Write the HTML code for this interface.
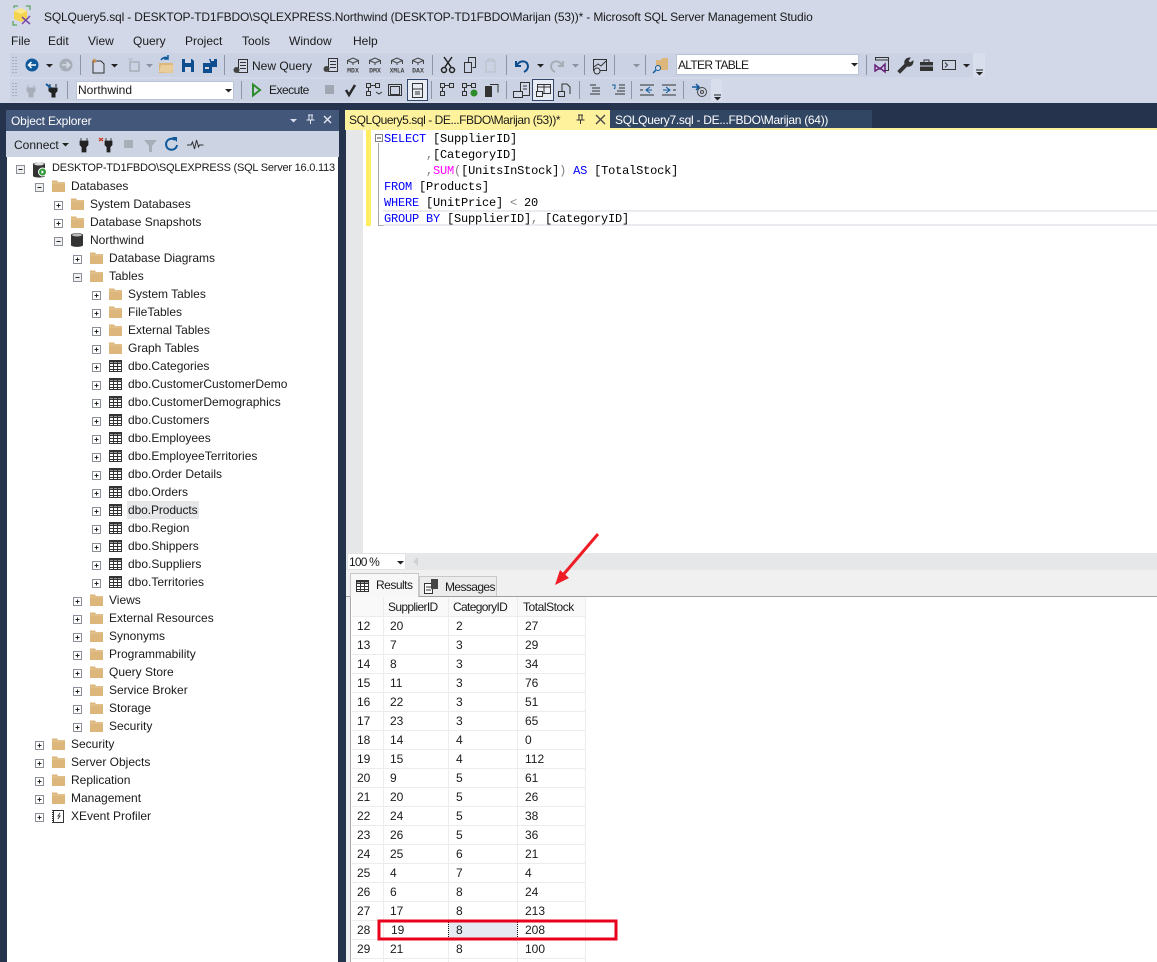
<!DOCTYPE html>
<html><head><meta charset="utf-8"><style>
html,body{margin:0;padding:0}
body{width:1157px;height:962px;overflow:hidden;position:relative;background:#d2d8e8;font:12px/18px "Liberation Sans",sans-serif;color:#1a1a1a}
.b{position:absolute}
.t{position:absolute;white-space:pre;line-height:18px}
.c{position:absolute;white-space:pre;font:12px/16px "Liberation Mono",monospace;letter-spacing:-.2px;color:#000}
.k{color:#0000ff}.f{color:#ff00ff}.g{color:#808080}
svg{position:absolute;left:0;top:0}
</style></head><body>
<div class="b" style="left:10px;top:53px;width:963px;height:24px;background:#cad2e3"></div>
<div class="b" style="left:973px;top:53px;width:12px;height:24px;background:#d8deeb"></div>
<div class="b" style="left:10px;top:79px;width:701px;height:22px;background:#cad2e3"></div>
<div class="b" style="left:711px;top:79px;width:11px;height:22px;background:#d8deeb"></div>
<div class="b" style="left:676px;top:54px;width:183px;height:21px;background:#fff;border:1px solid #bcc5d8;box-sizing:border-box"></div>
<div class="b" style="left:76px;top:81px;width:158px;height:19px;background:#fff;border:1px solid #bcc5d8;box-sizing:border-box"></div>
<div class="b" style="left:407px;top:79px;width:21px;height:22px;background:#e8ecf4;border:1px solid #33476a;box-sizing:border-box"></div>
<div class="b" style="left:532px;top:79px;width:22px;height:22px;background:#e8ecf4;border:1px solid #33476a;box-sizing:border-box"></div>
<div class="b" style="left:0;top:103px;width:1157px;height:859px;background:#25344c"></div>
<div class="b" style="left:6px;top:110px;width:333px;height:21px;background:#43577a"></div>
<div class="b" style="left:6px;top:131px;width:333px;height:26px;background:#ccd4e4"></div>
<div class="b" style="left:7px;top:157px;width:331px;height:805px;background:#fff"></div>
<div class="b" style="left:345px;top:110px;width:265px;height:18px;background:#fff29d"></div>
<div class="b" style="left:610px;top:110px;width:262px;height:18px;background:#314663"></div>
<div class="b" style="left:345px;top:128px;width:812px;height:2px;background:#fff29d"></div>
<div class="b" style="left:346px;top:130px;width:811px;height:423px;background:#fff"></div>
<div class="b" style="left:346px;top:130px;width:17px;height:423px;background:#e6e7e8"></div>
<div class="b" style="left:366px;top:130px;width:5px;height:96px;background:#ffee62"></div>
<div class="b" style="left:383px;top:210px;width:774px;height:16px;box-sizing:border-box;border:1px solid #eaeaf0;border-width:2px 0"></div>
<div class="b" style="left:346px;top:553px;width:811px;height:17px;background:#e6e7e8"></div>
<div class="b" style="left:347px;top:553px;width:59px;height:17px;background:#fff;box-sizing:border-box;border:1px solid #e0e2e6"></div>
<div class="b" style="left:346px;top:570px;width:811px;height:392px;background:#f0f0f0"></div>
<div class="b" style="left:346px;top:596px;width:811px;height:1px;background:#a0a0a0"></div>
<div class="b" style="left:350px;top:573px;width:69px;height:24px;background:#f7f7f7;border:1px solid #c8c8c8;border-bottom:0;box-sizing:border-box"></div>
<div class="b" style="left:419px;top:576px;width:78px;height:20px;background:#ececec;border:1px solid #c8c8c8;border-bottom:0;box-sizing:border-box"></div>
<div class="b" style="left:350px;top:597px;width:807px;height:365px;background:#fff;border-left:1px solid #a8a8a8;box-sizing:border-box"></div>
<div class="b" style="left:352px;top:597px;width:234px;height:19px;background:#f9f9f9"></div>
<div class="b" style="left:449px;top:920px;width:69px;height:19px;background:#e6e9f2"></div>

<svg width="1157" height="962" viewBox="0 0 1157 962" fill="none">
<defs>
<g id="fo"><path d="M0 3V1.500h5L6 3h7v10H0z" fill="#dcb67a"/><path d="M0 4h13" stroke="#e6c896"/></g>
<g id="pl"><rect x=".5" y="1.500" width="8" height="8" fill="#fff" stroke="#8a8f9a"/><path d="M2.500 5.500h4M4.500 3.500v4" stroke="#222"/></g>
<g id="mi"><rect x=".5" y="1.500" width="8" height="8" fill="#f0f0f0" stroke="#8a8f9a"/><path d="M2.500 5.500h4" stroke="#222"/></g>
<g id="tb"><rect x=".5" y=".5" width="12" height="11" fill="#fff" stroke="#333"/><path d="M.5 3.500h12M.5 6.500h12M.5 9.500h12M4.500 .5v11M8.500 .5v11" stroke="#333"/><rect x="0" y="0" width="13" height="2.500" fill="#333"/></g>
<g id="flow"><path d="M.5 .5h4v4h-4zM.5 8.500h4v4h-4zM9.500 .5h4v4h-4z" stroke="#333"/><path d="M2.500 4.500v4M4.500 2.500h5" stroke="#333"/></g>
<g id="doc"><path d="M5.500 .5h9v13h-9z" fill="#d2d8e8" stroke="#333"/><path d="M7 3.500h6M7 6.500h6M7 9.500h6" stroke="#333"/><circle cx="3.500" cy="11" r="3" fill="#444"/></g>
<g id="cube"><path d="M2.500 7V3.500L8 1l5.500 2.500V7M2.500 3.500L8 6l5.500-2.500M8 6v2" stroke="#444"/></g>
<g id="dd"><path d="M0 0h7L3.500 3.500z"/></g>
<g id="grid01"><rect x="7.500" y=".5" width="9" height="13" fill="#d2d8e8" stroke="#333"/><path d="M10 4h4M10 7h4" stroke="#333"/><rect x=".5" y="9.500" width="9" height="6" fill="#d2d8e8" stroke="#333"/></g>
</defs>
<!-- app icon -->
<path d="M14 11l7-3 6 3v8l-6 3-7-3z" fill="#f4d44e"/><path d="M21 8l6 3-6 3-7-3z" fill="#f9e88c"/><path d="M14 8V6h4M26 6h4v4M13 21v4h4" stroke="#3a9a3a"/><path d="M22 24l8-8M22 17l8 7" stroke="#7a4aa8" stroke-width="1.500"/>
<!-- grips -->
<path d="M13 57v17M16 57v17M13 83v15M16 83v15" stroke="#7f8aa0" stroke-dasharray="1 2"/>
<!-- toolbar 1 -->
<circle cx="32" cy="65" r="6.500" fill="#0e5a9c"/><path d="M36 65h-7M31.500 62l-3 3 3 3" stroke="#fff" stroke-width="1.500"/>
<use href="#dd" x="46" y="64" fill="#222"/>
<circle cx="66" cy="65" r="6.500" fill="#a8aeb8"/><path d="M62 65h7M66.500 62l3 3-3 3" stroke="#d8dce6" stroke-width="1.500"/>
<path d="M80.500 55v20M224.500 55v20M432.500 55v20M506.500 55v20M584.500 55v20M614.500 55v20M645.500 55v20M866.500 55v20" stroke="#8c96a8"/>
<path d="M93 61h8l3 3v9h-11z" fill="#d2d8e8" stroke="#333"/><path d="M93 58l1.500 2 1.500-2-1 2.500 2 .5-2 .5 1 2-1.500-1.500-1.500 1.500 .5-2-2-.5 2-.5z" fill="#c87a1e"/>
<use href="#dd" x="111" y="64" fill="#222"/>
<rect x="130" y="62" width="9" height="9" stroke="#a8aeb8" stroke-width="1.500"/><path d="M128 58l2 2 2-2-1 3 2 .5-2 .5" stroke="#b8bec8"/>
<use href="#dd" x="146" y="64" fill="#8a919e"/>
<path d="M159 63h14v10h-14z" fill="#dcb67a"/><path d="M159 72l2-7h13l-2 8z" fill="#e9cd9b"/><path d="M161 60c2-3 5-3 7-2M168 55v4h-4" stroke="#0e5a9c" stroke-width="1.500"/>
<path d="M182 59h10l2 2v11h-12z" fill="#0e4d8e"/><rect x="185" y="59" width="6" height="4" fill="#d2d8e8"/><rect x="185" y="67" width="6" height="5" fill="#d2d8e8"/>
<path d="M203 63h9v10h-9zM209 59h8v8h-5z" fill="#0e4d8e"/><rect x="205" y="67" width="4" height="2" fill="#d2d8e8"/><rect x="211" y="59" width="3" height="2" fill="#d2d8e8"/>
<use href="#doc" x="233" y="59"/>
<use href="#doc" x="323" y="58"/>
<use href="#cube" x="345" y="57"/><use href="#cube" x="367" y="57"/><use href="#cube" x="389" y="57"/><use href="#cube" x="410" y="57"/>
<g font-family="Liberation Mono,monospace" font-weight="700" font-size="6.500" fill="#444" text-anchor="middle"><text x="353" y="72.500">MDX</text><text x="375" y="72.500">DMX</text><text x="397" y="72.500" font-size="6">XMLA</text><text x="418" y="72.500">DAX</text></g>
<path d="M444 57l7 10M452 57l-7 10" stroke="#222" stroke-width="1.500"/><circle cx="444" cy="70" r="2.500" stroke="#222" stroke-width="1.500"/><circle cx="452" cy="70" r="2.500" stroke="#222" stroke-width="1.500"/>
<path d="M468.500 62.500v-5h7v10h-3" stroke="#333"/><rect x="464.500" y="62.500" width="7" height="10" stroke="#333"/>
<path d="M486 61h9v11h-9zM488 61v-2h5v2" stroke="#b8bec8"/>
<path d="M516 61v5h5M517 65c3-5 10-5 11 1 0 3-2 5-4 6" stroke="#0e4d8e" stroke-width="2"/>
<use href="#dd" x="537" y="64" fill="#222"/>
<path d="M563 61v5h-5M562 65c-3-5-10-5-11 1 0 3 2 5 4 6" stroke="#a8aeb8" stroke-width="2"/>
<use href="#dd" x="572" y="64" fill="#8a919e"/>
<rect x="593.500" y="59.500" width="13" height="11" stroke="#333"/><path d="M594 67l4-3 3 2 5-5" stroke="#333"/><circle cx="597" cy="71" r="3" fill="#d2d8e8" stroke="#333"/>
<use href="#dd" x="633" y="64" fill="#8a919e"/>
<path d="M656 60h5l1-2h6v12h-12z" fill="#dcb67a"/><circle cx="658" cy="68" r="2.500" fill="#d2d8e8" stroke="#0e5a9c"/><path d="M656 70l-3 3" stroke="#0e5a9c" stroke-width="1.500"/>
<use href="#dd" x="851" y="63" fill="#222"/>
<path d="M875.500 60v-2.500h13v13h-5M875 60h13" stroke="#333"/><path d="M875 65l5 4 5-5v8l-5-4-5 3z" stroke="#68217a" stroke-width="1.500"/>
<path d="M898 71l7-7c-1-3 1-6 5-6l-2 3 2 2 3-2c0 4-3 6-6 5l-7 7z" fill="#333" stroke="#333"/>
<path d="M920 62h13v9h-13z" fill="#333"/><path d="M924 62v-2h5v2" stroke="#333"/><path d="M920 66h13" stroke="#d2d8e8"/>
<rect x="942.500" y="60.500" width="13" height="9" stroke="#333"/><path d="M945 62.500l2.500 2.500-2.500 2.500" stroke="#333"/>
<use href="#dd" x="963" y="64" fill="#222"/>
<path d="M976 70h7" stroke="#222"/><use href="#dd" x="976" y="72" fill="#222"/>
<!-- toolbar 2 -->
<path d="M28 85v3M34 85v3M27 88h8v3l-2 2v4h-4v-4l-2-2z" stroke="#a8aeb8" fill="#a8aeb8"/>
<path d="M50 84v3M56 84v3M49 88h8v3l-2 2v4h-3v-4l-3-2z" fill="#222" stroke="#222"/><path d="M46 84l5 4" stroke="#0e5a9c" stroke-width="2"/>
<path d="M67.500 81v18M241.500 81v18M431.500 81v18M506.500 81v18M579.500 81v18M631.500 81v18M683.500 81v18" stroke="#8c96a8"/>
<use href="#dd" x="225" y="89" fill="#222"/>
<path d="M253 84.500l7 5.500-7 5.500z" stroke="#2e8b2e" stroke-width="2"/>
<rect x="325" y="85" width="9" height="9" fill="#a0a6b2"/>
<path d="M346 90l3 5 6-10" stroke="#2a2a2a" stroke-width="2.500"/>
<use href="#flow" x="366" y="83"/><use href="#flow" x="440" y="83"/><use href="#flow" x="462" y="83"/>
<path d="M376 92l3 2 3-2" stroke="#333"/>
<circle cx="474" cy="93" r="3.500" fill="#2e8b2e"/>
<rect x="390.500" y="86.500" width="9" height="8" stroke="#333"/><rect x="388.500" y="84.500" width="13" height="11" stroke="#333"/>
<rect x="412.500" y="83.500" width="10" height="14" stroke="#333"/><path d="M413 89h9M415 92h5M415 94h5" stroke="#333"/>
<rect x="485" y="86" width="7" height="11" fill="#333"/><path d="M490 84.500h8v8" stroke="#333"/>
<use href="#grid01" x="513" y="82"/>
<rect x="537.500" y="84.500" width="13" height="9" fill="#e8ecf4" stroke="#333"/><path d="M537 87h13M544 85v8" stroke="#333"/><rect x="536.500" y="91.500" width="6" height="5" fill="#e8ecf4" stroke="#333"/>
<path d="M562 92v-8h5l3 3v7" stroke="#333"/><rect x="558.500" y="91.500" width="6" height="5" stroke="#333"/>
<path d="M590 85h6M592 88h8M592 91h8M590 94h10" stroke="#333"/>
<path d="M619 85h6M619 88h6M617 91h8M615 94h10" stroke="#333"/><path d="M612 85h3v3l-1 1" stroke="#0e5a9c"/>
<path d="M640 85h14M640 95h14M640 90h3" stroke="#333"/><path d="M652 90h-6M650 87l-4 3 4 3" stroke="#0e5a9c"/>
<path d="M662 85h14M662 95h14M673 90h3" stroke="#333"/><path d="M663 90h6M666 87l4 3-4 3" stroke="#0e5a9c"/>
<path d="M692 87h7M696 84l3 3-3 3" stroke="#0e5a9c" stroke-width="1.500"/><circle cx="702" cy="92" r="4.500" stroke="#444"/><circle cx="702" cy="92" r="1.500" stroke="#444"/>
<path d="M714 95h7" stroke="#222"/><use href="#dd" x="714" y="97" fill="#222"/>
<!-- OE header -->
<use href="#dd" x="290" y="119" fill="#d8deeb"/>
<path d="M308 115h5M309 115v5h3v-5M306.500 120h8M310.500 120v4" stroke="#e8ecf4"/>
<path d="M324 116l7 7M331 116l-7 7" stroke="#e8ecf4" stroke-width="1.300"/>
<use href="#dd" x="62" y="143" fill="#222"/>
<path d="M81 138v3M87 138v3M80 141h8v4l-2 2v5h-4v-5l-2-2z" fill="#222" stroke="#222" stroke-width=".8"/>
<path d="M106 138v3M111 138v3M105 141h7v4l-2 2v5h-3v-5l-2-2z" fill="#222" stroke="#222" stroke-width=".8"/><path d="M99 138l4 3M103 138l-4 3" stroke="#c8351e" stroke-width="1.200"/>
<rect x="124" y="140" width="9" height="8" fill="#a8aeb8"/>
<path d="M144 140h13l-5 6v6h-3v-6z" fill="#a8aeb8"/>
<path d="M175 140a5.500 5.500 0 1 0 2 5" stroke="#0e5a9c" stroke-width="2"/><path d="M172 137h5v5z" fill="#0e5a9c"/>
<path d="M187 145h4l1.500-3 2 7 2-9 2 7 1-2h4" stroke="#333"/>
<!-- tabs -->
<path d="M578 115h5M579 115v5h3v-5M576.500 120h8M580.500 120v4" stroke="#333"/>
<path d="M596 115l9 9M605 115l-9 9" stroke="#444" stroke-width="1.300"/>
<!-- editor fold -->
<path d="M378.500 143v83M378.500 225.500h5" stroke="#a8a8a8"/>
<rect x="375.500" y="134.500" width="7" height="7" fill="#fff" stroke="#808080"/><path d="M377 138h4" stroke="#444"/>
<!-- zoom bar -->
<use href="#dd" x="397" y="561" fill="#222"/>
<path d="M418 557v9l-5-4.500z" fill="#cfd1d6"/>
<!-- results tabs -->
<use href="#tb" x="356" y="580"/>
<path d="M424.500 583.500h7l1 1v9h-8z" fill="#fff" stroke="#333"/><path d="M426 587h5M426 590h5" stroke="#333"/><rect x="431" y="579" width="7" height="10" fill="#444"/>
<!-- tree expanders -->
<use href="#mi" x="16" y="164"/><use href="#mi" x="35" y="182"/>
<use href="#pl" x="54" y="200"/><use href="#pl" x="54" y="218"/><use href="#mi" x="54" y="236"/>
<use href="#pl" x="73" y="254"/><use href="#mi" x="73" y="272"/>
<use href="#pl" x="92" y="290"/><use href="#pl" x="92" y="308"/><use href="#pl" x="92" y="326"/><use href="#pl" x="92" y="344"/><use href="#pl" x="92" y="362"/><use href="#pl" x="92" y="380"/><use href="#pl" x="92" y="398"/><use href="#pl" x="92" y="416"/><use href="#pl" x="92" y="434"/><use href="#pl" x="92" y="452"/><use href="#pl" x="92" y="470"/><use href="#pl" x="92" y="488"/><use href="#pl" x="92" y="506"/><use href="#pl" x="92" y="524"/><use href="#pl" x="92" y="542"/><use href="#pl" x="92" y="560"/><use href="#pl" x="92" y="578"/>
<use href="#pl" x="73" y="596"/><use href="#pl" x="73" y="614"/><use href="#pl" x="73" y="632"/><use href="#pl" x="73" y="650"/><use href="#pl" x="73" y="668"/><use href="#pl" x="73" y="686"/><use href="#pl" x="73" y="704"/><use href="#pl" x="73" y="722"/>
<use href="#pl" x="35" y="740"/><use href="#pl" x="35" y="758"/><use href="#pl" x="35" y="776"/><use href="#pl" x="35" y="794"/><use href="#pl" x="35" y="812"/>
<!-- tree icons -->
<path d="M33 164c0-2 12-2 12 0v12c0 2-12 2-12 0z" fill="#333"/><ellipse cx="39" cy="164" rx="5" ry="1.500" fill="#ddd"/><circle cx="42.500" cy="172" r="4" fill="#2e9a3a" stroke="#fff"/><path d="M41.500 170v4l2.500-2z" fill="#fff"/>
<use href="#fo" x="52" y="179"/><use href="#fo" x="71" y="197"/><use href="#fo" x="71" y="215"/>
<path d="M71 235c0-2.500 12-2.500 12 0v10c0 2.500-12 2.500-12 0z" fill="#333"/><ellipse cx="77" cy="235" rx="5" ry="1.500" fill="#bbb"/>
<use href="#fo" x="90" y="251"/><use href="#fo" x="90" y="269"/>
<use href="#fo" x="109" y="287"/><use href="#fo" x="109" y="305"/><use href="#fo" x="109" y="323"/><use href="#fo" x="109" y="341"/>
<use href="#tb" x="109" y="360"/><use href="#tb" x="109" y="378"/><use href="#tb" x="109" y="396"/><use href="#tb" x="109" y="414"/><use href="#tb" x="109" y="432"/><use href="#tb" x="109" y="450"/><use href="#tb" x="109" y="468"/><use href="#tb" x="109" y="486"/><use href="#tb" x="109" y="504"/><use href="#tb" x="109" y="522"/><use href="#tb" x="109" y="540"/><use href="#tb" x="109" y="558"/><use href="#tb" x="109" y="576"/>
<use href="#fo" x="90" y="593"/><use href="#fo" x="90" y="611"/><use href="#fo" x="90" y="629"/><use href="#fo" x="90" y="647"/><use href="#fo" x="90" y="665"/><use href="#fo" x="90" y="683"/><use href="#fo" x="90" y="701"/><use href="#fo" x="90" y="719"/>
<use href="#fo" x="52" y="737"/><use href="#fo" x="52" y="755"/><use href="#fo" x="52" y="773"/><use href="#fo" x="52" y="791"/>
<rect x="53.500" y="810.500" width="10" height="12" fill="#fff" stroke="#333"/><path d="M53 810v13" stroke="#333" stroke-width="2" stroke-dasharray="1 1"/><path d="M60 813l-2 3h2l-2 3" stroke="#444"/>
<!-- grid lines -->
<path d="M352 616.500h234M352 635.500h234M352 654.500h234M352 673.500h234M352 692.500h234M352 711.500h234M352 730.500h234M352 749.500h234M352 768.500h234M352 787.500h234M352 806.500h234M352 825.500h234M352 844.500h234M352 863.500h234M352 882.500h234M352 901.500h234M352 920.500h234M352 939.500h234M352 958.500h234M383.500 597v365M448.500 597v365M517.500 597v365M585.500 597v365" stroke="#ececec"/>
<path d="M448.500 920v19M517.500 920v19" stroke="#111" stroke-dasharray="1 1"/>
<!-- annotations -->
<rect x="379" y="921" width="237" height="18" stroke="#e8001c" stroke-width="3"/>
<path d="M598 534L563 575" stroke="#ee1c25" stroke-width="3"/><path d="M555 585l5-15 9 8z" fill="#ee1c25"/>
</svg>

<span class="t" style="left:44px;top:8px;letter-spacing:-.15px">SQLQuery5.sql - DESKTOP-TD1FBDO\SQLEXPRESS.Northwind (DESKTOP-TD1FBDO\Marijan (53))* - Microsoft SQL Server Management Studio</span>
<span class="t" style="left:11px;top:32px">File</span><span class="t" style="left:48px;top:32px">Edit</span><span class="t" style="left:88px;top:32px">View</span><span class="t" style="left:133px;top:32px">Query</span><span class="t" style="left:185px;top:32px">Project</span><span class="t" style="left:242px;top:32px">Tools</span><span class="t" style="left:289px;top:32px">Window</span><span class="t" style="left:353px;top:32px">Help</span>
<span class="t" style="left:252px;top:57px">New Query</span>
<span class="t" style="left:678px;top:56px;letter-spacing:-.7px">ALTER TABLE</span>
<span class="t" style="left:78px;top:81px">Northwind</span>
<span class="t" style="left:269px;top:81px;letter-spacing:-.5px">Execute</span>
<span class="t" style="left:11px;top:112px;color:#fff;letter-spacing:-.15px">Object Explorer</span>
<span class="t" style="left:14px;top:136px">Connect</span>
<span class="t" style="left:349px;top:111px;letter-spacing:-.44px">SQLQuery5.sql - DE...FBDO\Marijan (53))*</span>
<span class="t" style="left:615px;top:111px;color:#fff;letter-spacing:-.28px">SQLQuery7.sql - DE...FBDO\Marijan (64))</span>

<span class="c" style="left:384px;top:131px"><span class="k">SELECT</span> [SupplierID]</span>
<span class="c" style="left:384px;top:147px">      <span class="g">,</span>[CategoryID]</span>
<span class="c" style="left:384px;top:163px">      <span class="g">,</span><span class="f">SUM</span><span class="g">(</span>[UnitsInStock]<span class="g">)</span> <span class="k">AS</span> [TotalStock]</span>
<span class="c" style="left:384px;top:179px"><span class="k">FROM</span> [Products]</span>
<span class="c" style="left:384px;top:195px"><span class="k">WHERE</span> [UnitPrice] <span class="g">&lt;</span> 20</span>
<span class="c" style="left:384px;top:211px"><span class="k">GROUP BY</span> [SupplierID]<span class="g">,</span> [CategoryID]</span>

<span class="t" style="left:52px;top:159px;font-size:11px;letter-spacing:-.22px">DESKTOP-TD1FBDO\SQLEXPRESS (SQL Server 16.0.113</span>
<span class="t" style="left:71px;top:177px">Databases</span>
<span class="t" style="left:90px;top:195px">System Databases</span>
<span class="t" style="left:90px;top:213px">Database Snapshots</span>
<span class="t" style="left:90px;top:231px">Northwind</span>
<span class="t" style="left:109px;top:249px">Database Diagrams</span>
<span class="t" style="left:109px;top:267px">Tables</span>
<span class="t" style="left:128px;top:285px">System Tables</span>
<span class="t" style="left:128px;top:303px">FileTables</span>
<span class="t" style="left:128px;top:321px">External Tables</span>
<span class="t" style="left:128px;top:339px">Graph Tables</span>
<span class="t" style="left:128px;top:357px">dbo.Categories</span>
<span class="t" style="left:128px;top:375px">dbo.CustomerCustomerDemo</span>
<span class="t" style="left:128px;top:393px">dbo.CustomerDemographics</span>
<span class="t" style="left:128px;top:411px">dbo.Customers</span>
<span class="t" style="left:128px;top:429px">dbo.Employees</span>
<span class="t" style="left:128px;top:447px">dbo.EmployeeTerritories</span>
<span class="t" style="left:128px;top:465px">dbo.Order Details</span>
<span class="t" style="left:128px;top:483px">dbo.Orders</span>
<span class="t" style="left:127px;top:501px;background:#e6e7e8;padding:0 1px;letter-spacing:-.1px">dbo.Products</span>
<span class="t" style="left:128px;top:519px">dbo.Region</span>
<span class="t" style="left:128px;top:537px">dbo.Shippers</span>
<span class="t" style="left:128px;top:555px">dbo.Suppliers</span>
<span class="t" style="left:128px;top:573px">dbo.Territories</span>
<span class="t" style="left:109px;top:591px">Views</span>
<span class="t" style="left:109px;top:609px">External Resources</span>
<span class="t" style="left:109px;top:627px">Synonyms</span>
<span class="t" style="left:109px;top:645px">Programmability</span>
<span class="t" style="left:109px;top:663px">Query Store</span>
<span class="t" style="left:109px;top:681px">Service Broker</span>
<span class="t" style="left:109px;top:699px">Storage</span>
<span class="t" style="left:109px;top:717px">Security</span>
<span class="t" style="left:71px;top:735px">Security</span>
<span class="t" style="left:71px;top:753px">Server Objects</span>
<span class="t" style="left:71px;top:771px">Replication</span>
<span class="t" style="left:71px;top:789px">Management</span>
<span class="t" style="left:71px;top:807px">XEvent Profiler</span>

<span class="t" style="left:349px;top:553px;letter-spacing:-.8px">100 %</span>
<span class="t" style="left:376px;top:576px;letter-spacing:-.5px">Results</span>
<span class="t" style="left:445px;top:578px;letter-spacing:-.6px">Messages</span>
<span class="t" style="left:388px;top:598px;letter-spacing:-.65px">SupplierID</span><span class="t" style="left:453px;top:598px;letter-spacing:-.65px">CategoryID</span><span class="t" style="left:523px;top:598px;letter-spacing:-.45px">TotalStock</span>

<div class="b" style="left:0;top:1px;width:1157px;height:961px">
<span class="t" style="left:357px;top:616px">12</span><span class="t" style="left:390px;top:616px">20</span><span class="t" style="left:456px;top:616px">2</span><span class="t" style="left:525px;top:616px">27</span>
<span class="t" style="left:357px;top:635px">13</span><span class="t" style="left:390px;top:635px">7</span><span class="t" style="left:456px;top:635px">3</span><span class="t" style="left:525px;top:635px">29</span>
<span class="t" style="left:357px;top:654px">14</span><span class="t" style="left:390px;top:654px">8</span><span class="t" style="left:456px;top:654px">3</span><span class="t" style="left:525px;top:654px">34</span>
<span class="t" style="left:357px;top:673px">15</span><span class="t" style="left:390px;top:673px">11</span><span class="t" style="left:456px;top:673px">3</span><span class="t" style="left:525px;top:673px">76</span>
<span class="t" style="left:357px;top:692px">16</span><span class="t" style="left:390px;top:692px">22</span><span class="t" style="left:456px;top:692px">3</span><span class="t" style="left:525px;top:692px">51</span>
<span class="t" style="left:357px;top:711px">17</span><span class="t" style="left:390px;top:711px">23</span><span class="t" style="left:456px;top:711px">3</span><span class="t" style="left:525px;top:711px">65</span>
<span class="t" style="left:357px;top:730px">18</span><span class="t" style="left:390px;top:730px">14</span><span class="t" style="left:456px;top:730px">4</span><span class="t" style="left:525px;top:730px">0</span>
<span class="t" style="left:357px;top:749px">19</span><span class="t" style="left:390px;top:749px">15</span><span class="t" style="left:456px;top:749px">4</span><span class="t" style="left:525px;top:749px">112</span>
<span class="t" style="left:357px;top:768px">20</span><span class="t" style="left:390px;top:768px">9</span><span class="t" style="left:456px;top:768px">5</span><span class="t" style="left:525px;top:768px">61</span>
<span class="t" style="left:357px;top:787px">21</span><span class="t" style="left:390px;top:787px">20</span><span class="t" style="left:456px;top:787px">5</span><span class="t" style="left:525px;top:787px">26</span>
<span class="t" style="left:357px;top:806px">22</span><span class="t" style="left:390px;top:806px">24</span><span class="t" style="left:456px;top:806px">5</span><span class="t" style="left:525px;top:806px">38</span>
<span class="t" style="left:357px;top:825px">23</span><span class="t" style="left:390px;top:825px">26</span><span class="t" style="left:456px;top:825px">5</span><span class="t" style="left:525px;top:825px">36</span>
<span class="t" style="left:357px;top:844px">24</span><span class="t" style="left:390px;top:844px">25</span><span class="t" style="left:456px;top:844px">6</span><span class="t" style="left:525px;top:844px">21</span>
<span class="t" style="left:357px;top:863px">25</span><span class="t" style="left:390px;top:863px">4</span><span class="t" style="left:456px;top:863px">7</span><span class="t" style="left:525px;top:863px">4</span>
<span class="t" style="left:357px;top:882px">26</span><span class="t" style="left:390px;top:882px">6</span><span class="t" style="left:456px;top:882px">8</span><span class="t" style="left:525px;top:882px">24</span>
<span class="t" style="left:357px;top:901px">27</span><span class="t" style="left:390px;top:901px">17</span><span class="t" style="left:456px;top:901px">8</span><span class="t" style="left:525px;top:901px">213</span>
<span class="t" style="left:357px;top:920px">28</span><span class="t" style="left:391px;top:920px">19</span><span class="t" style="left:456px;top:920px">8</span><span class="t" style="left:525px;top:920px">208</span>
<span class="t" style="left:357px;top:939px">29</span><span class="t" style="left:390px;top:939px">21</span><span class="t" style="left:456px;top:939px">8</span><span class="t" style="left:525px;top:939px">100</span>
</div>
</body></html>
